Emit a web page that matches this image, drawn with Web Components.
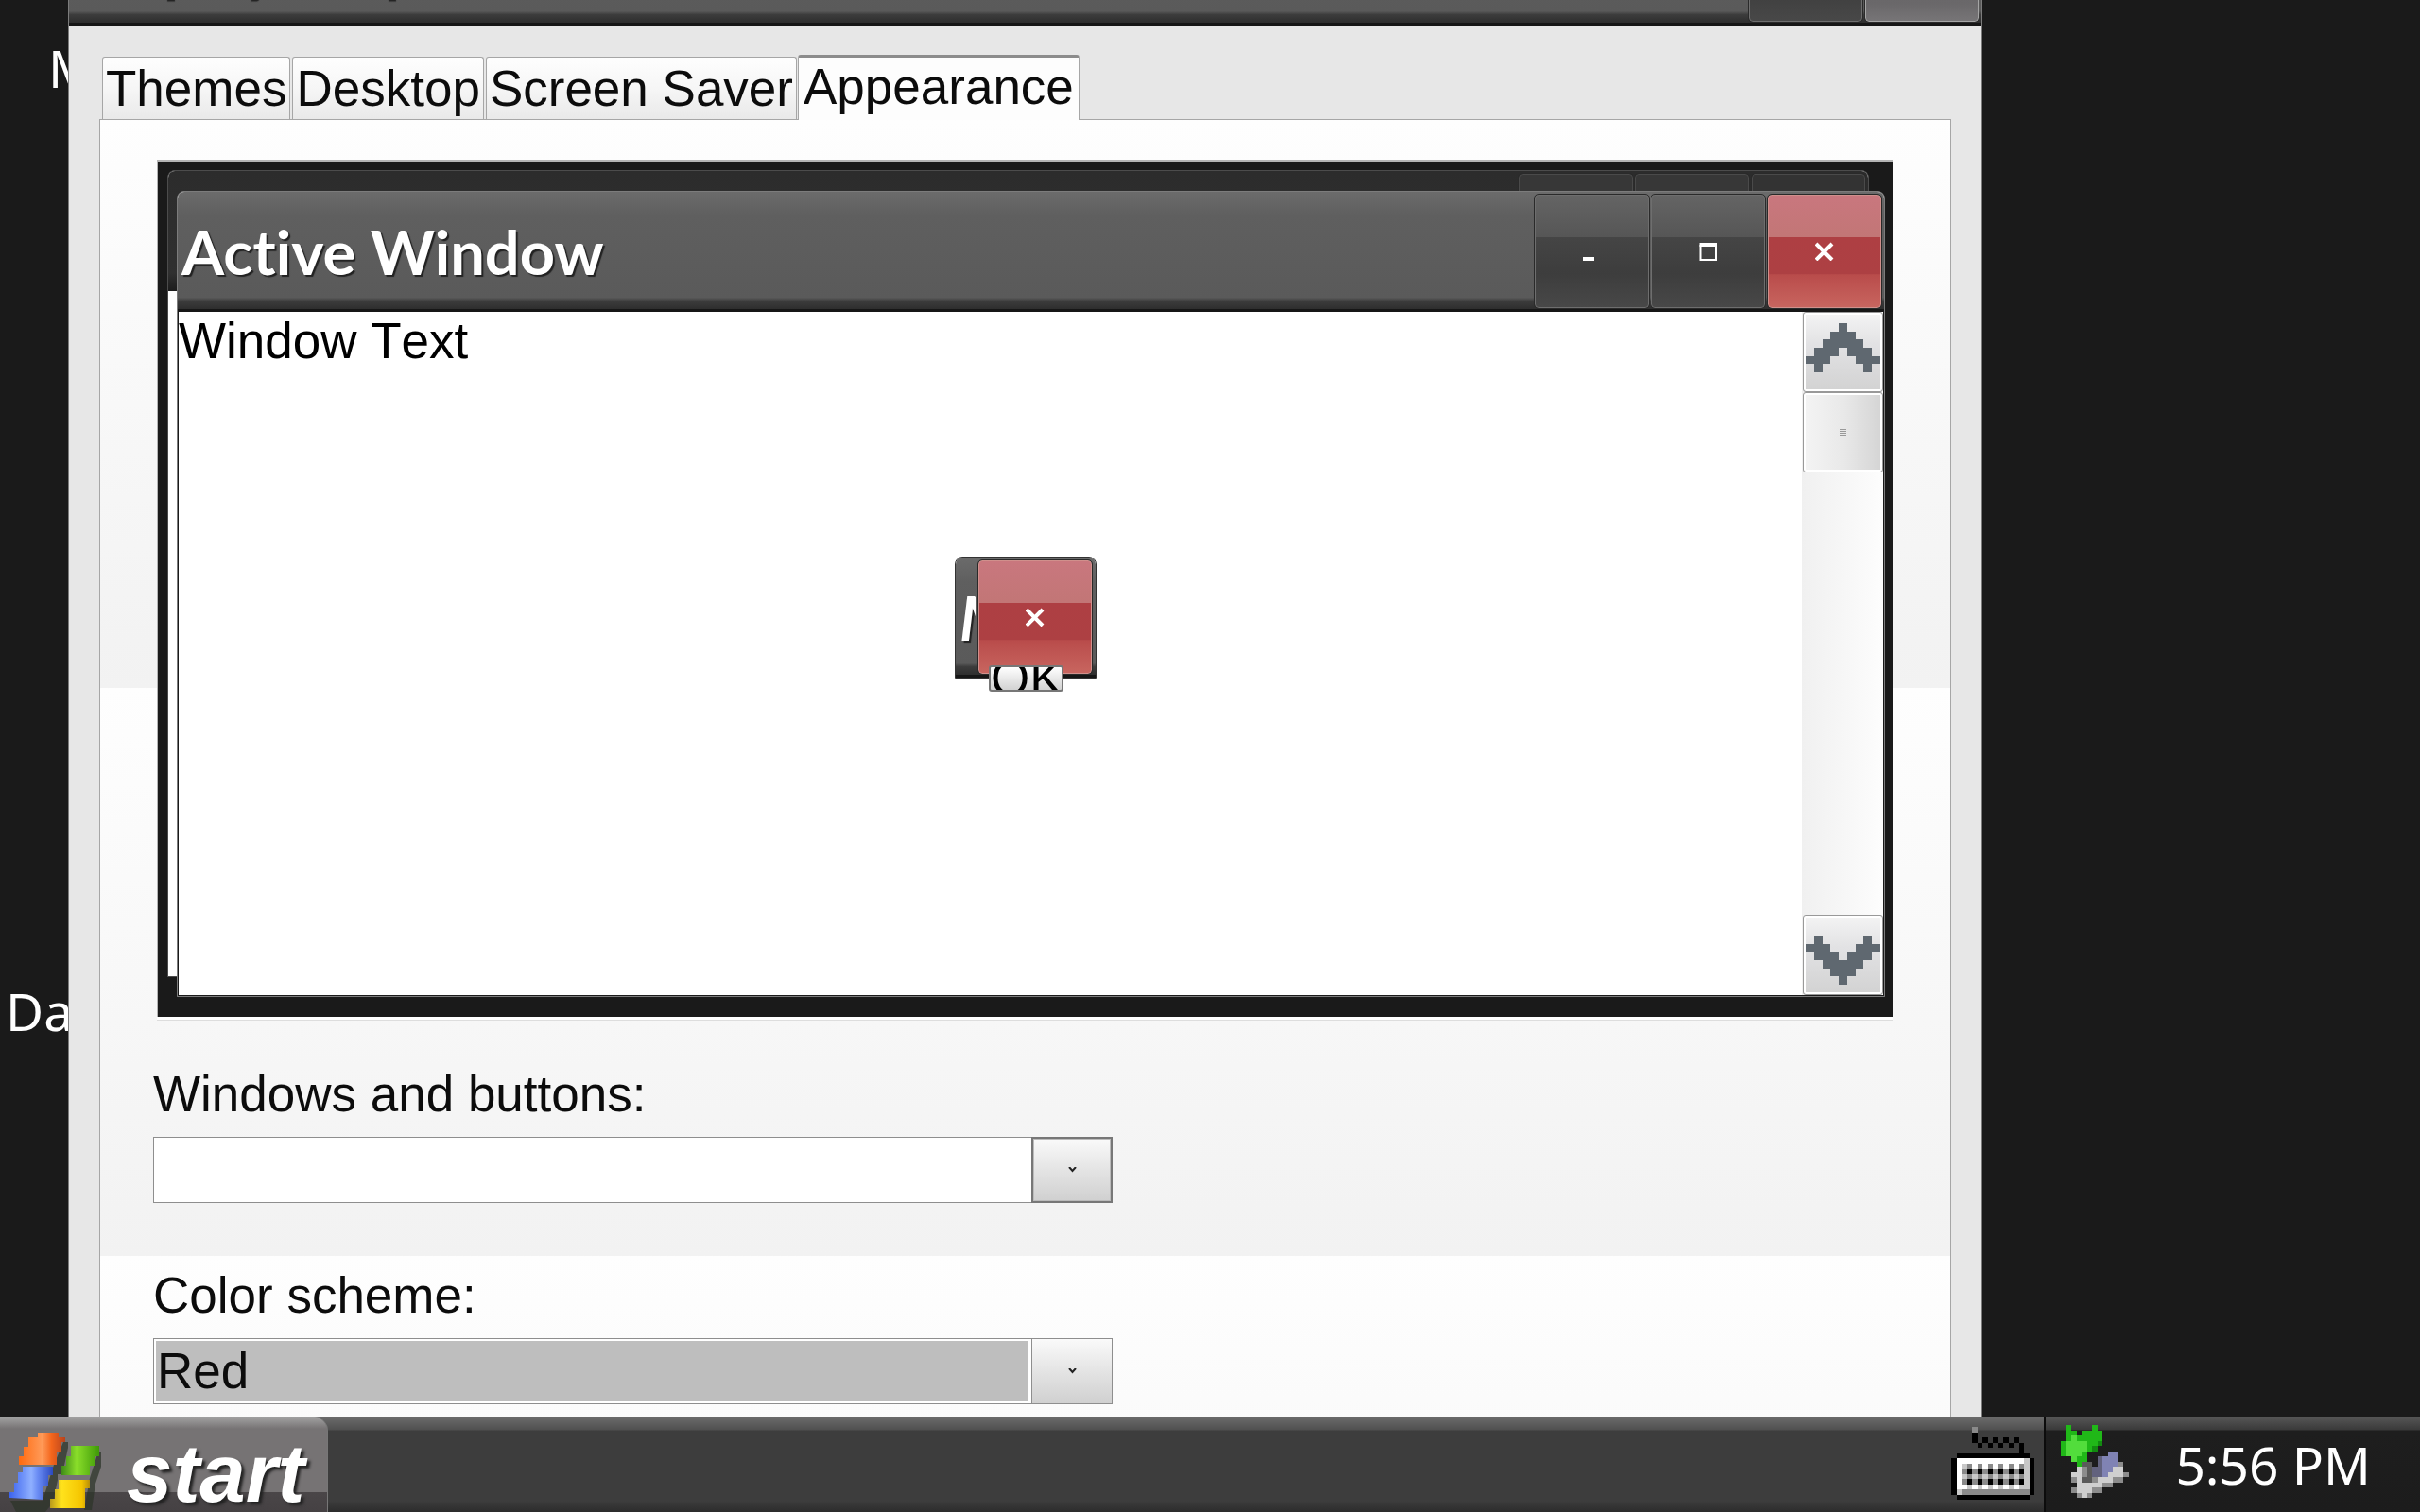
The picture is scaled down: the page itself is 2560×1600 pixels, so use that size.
<!DOCTYPE html>
<html lang="en">
<head>
<meta charset="utf-8">
<title>Display Properties</title>
<style>
  html, body {
    height: 100%;
    margin: 0;
  }
  body {
    overflow: hidden;
    background: #1a1a1a;
    font-family: "Liberation Sans", Arial, sans-serif;
    font-size: 53px;
    line-height: 60px;
    color: #0c0c0c;
  }
</style>
</head>
<body>

<xp-desktop>
  <xp-shortcut style="left: 51px; top: 42px">M</xp-shortcut>
  <xp-shortcut style="left: 6px; top: 1040px">Da</xp-shortcut>

  <xp-window class="main" caption="Display Properties" buttons="help close" tone="muted">
    <xp-tabs>
      <xp-tab>Themes</xp-tab>
      <xp-tab>Desktop</xp-tab>
      <xp-tab>Screen Saver</xp-tab>
      <xp-tab selected>Appearance</xp-tab>
    </xp-tabs>
    <xp-panel>
      <xp-preview></xp-preview>
      <xp-select label="Windows and buttons:" focused></xp-select>
      <xp-select label="Color scheme:" value="Red"></xp-select>
    </xp-panel>
  </xp-window>

  <xp-taskbar slot="taskbar"></xp-taskbar>
</xp-desktop>

<script>
'use strict';

// Base class: clones the class template into an open shadow root
class XPElement extends HTMLElement {
  constructor () {
    super();
    const tpl = document.createElement('template');
    tpl.innerHTML = this.constructor.template;
    this.attachShadow({ mode: 'open' });
    this.shadowRoot.appendChild(tpl.content.cloneNode(true));
  }

  $ (selector) {
    return this.shadowRoot.querySelector(selector);
  }
}

// Draws a bitmap icon: one character per pixel, '.' is transparent
class XPPixels extends XPElement {
  static get template () {
    return `
      <style>
        :host { display: block; flex: none; line-height: 0; }
        svg { display: block; width: 100%; height: 100%; }
      </style>
      <svg shape-rendering="crispEdges" preserveAspectRatio="none" aria-hidden="true"></svg>
    `;
  }

  connectedCallback () {
    const icon = XPPixels.icons[this.getAttribute('icon')];
    const width = Math.max(...icon.rows.map(r => r.length));
    const svg = this.$('svg');
    svg.setAttribute('viewBox', `0 0 ${width} ${icon.rows.length}`);
    let rects = '';
    icon.rows.forEach((row, y) => {
      Array.from(row).forEach((c, x) => {
        if (c !== '.')
          rects += `<rect x="${x}" y="${y}" width="1" height="1" fill="${icon.colors[c]}"/>`;
      });
    });
    svg.innerHTML = rects;
  }
}

XPPixels.icons = {
  up: {
    colors: { x: '#5f6870' },
    rows: [
      '....x....',
      '...xxx...',
      '..xxxxx..',
      '.xxx.xxx.',
      'xxx...xxx',
      '.x.....x.'
    ]
  },
  down: {
    colors: { x: '#5f6870' },
    rows: [
      '.x.....x.',
      'xxx...xxx',
      '.xxx.xxx.',
      '..xxxxx..',
      '...xxx...',
      '....x....'
    ]
  },
  keyboard: {
    colors: { k: '#000', w: '#fff', g: '#8a8a8a', s: '#c8c8c8' },
    rows: [
      '....g...........',
      '....k...........',
      '....k.k.k.k.k...',
      '.....k.k.k.k.k..',
      '.............k..',
      '.kkkkkkkkkkkkkk.',
      'kwwwwwwwwwwwwwsk',
      'kwsgwgwgwgwgwgsk',
      'kwgkgkgkgkgkgksk',
      'kwsgsgsgsgsgsgsk',
      'kwgkgkgkgkgkgksk',
      'kwwswswswswswssk',
      'ksgggggggggggggk',
      '.kkkkkkkkkkkkkk.'
    ]
  },
  remove: {
    colors: {
      G: '#20b818', L: '#52dd3c', d: '#128a10',
      p: '#62627e', B: '#8083b4', w: '#cfcfcf', s: '#8c8c8c', g: '#5a5a5a'
    },
    rows: [
      '.G....G......',
      '.GG.GGGG.....',
      '.GLGGGGG.....',
      'GLLLLGGd.....',
      'GLLLLGd......',
      'GLLLG....BB..',
      '..LGG..pBBB..',
      '...Ggg.pBBBs.',
      '...wsgppBBww.',
      '..wwsgpPBwwws',
      '..swggswwwss.',
      '...wwwwwss...',
      '..swwwss.....',
      '...sws.......'
    ].map(r => r.replace('P', 'p'))
  }
};

class XPDesktop extends XPElement {
  static get template () {
    return `
      <style>
        :host {
          display: grid;
          grid-template-rows: 1fr 101px;
          height: 100vh;
          background: #1a1a1a;
        }
        main { position: relative; overflow: hidden; }
        ::slotted(.main) {
          position: absolute;
          inset: -101px 463px -120px 72px;
        }
        ::slotted(xp-shortcut) { position: absolute; }
      </style>
      <main><slot></slot></main>
      <slot name="taskbar"></slot>
    `;
  }
}

class XPShortcut extends XPElement {
  static get template () {
    return `
      <style>
        :host {
          display: block;
          font-family: "Noto Sans", sans-serif;
          font-size: 55px;
          color: #fff;
        }
      </style>
      <slot></slot>
    `;
  }
}

// Window frame: caption, caption buttons and a slotted client area
class XPWindow extends XPElement {
  static get template () {
    return `
      <style>
        :host {
          display: flex;
          flex-direction: column;
          box-sizing: border-box;
          border: 1px solid #7c7c7c;
          border-radius: 8px 8px 0 0;
          overflow: hidden;
          background: #e7e7e7;
          --bar: linear-gradient(#6b6b6b, #5f5f5f 20%, #5a5a5a 88%, #3c3c3c 91%, #2d2d2d 98%, #161616 98%);
          --glass: linear-gradient(#646464, #565656 37%, #454545 37%, #3d3d3d 70%, #484848);
          --close: linear-gradient(#c9777e, #c27676 37%, #ae3f43 37%, #ad4043 70%, #b94c4b 71%, #c8655f);
        }
        :host([tone="muted"]) {
          --close: linear-gradient(#8a888a, #858385 37%, #646264 37%, #6a686a 85%, #777577);
        }
        :host([tone="inactive"]) {
          border-color: #4c4c4c;
          --bar: linear-gradient(#2c2c2c, #303030 85%, #1c1c1c);
          --glass: #373737;
          --close: #333;
        }
        header {
          display: flex;
          flex: none;
          gap: 3px;
          height: 127px;
          box-sizing: border-box;
          padding: 3px 3px 0 4px;
          background: var(--bar);
        }
        h1 {
          flex: 1;
          min-width: 0;
          margin: 0;
          overflow: hidden;
          white-space: nowrap;
          font: bold 65px/120px Lato, "Noto Sans", sans-serif;
          font-variant-ligatures: none;
          color: #fff;
          text-shadow: 2px 2px 1px #222;
        }
        :host([slanted]) h1 { font-style: italic; }
        :host([slanted]) header { padding-right: 4px; }
        button {
          display: grid;
          place-items: center;
          flex: none;
          width: 120px;
          height: 120px;
          box-sizing: border-box;
          padding: 0;
          border: 1px solid #6e6e6e;
          border-radius: 4px;
          outline: 1px solid #2a2a2a;
          background: var(--glass);
        }
        button.close { background: var(--close); border-color: #d0908c; }
        :host([tone="inactive"]) button { border-color: #4a4a4a; }
        :host([tone="muted"]) button.close { border-color: #a5a5a5; }
        svg { width: 20px; height: 20px; }
        section {
          display: flex;
          flex-direction: column;
          flex: 1;
          min-height: 0;
        }
      </style>
      <header><h1></h1></header>
      <section><slot></slot></section>
    `;
  }

  connectedCallback () {
    this.$('h1').textContent = this.getAttribute('caption');
    const names = (this.getAttribute('buttons') || '').split(' ');
    names.forEach(name => {
      const button = document.createElement('button');
      button.type = 'button';
      button.className = name;
      button.setAttribute('aria-label', name);
      button.innerHTML = `<svg viewBox="0 0 20 20" fill="none" stroke="#fff">${XPWindow.glyphs[name]}</svg>`;
      this.$('header').appendChild(button);
    });
  }
}

XPWindow.glyphs = {
  help: '<path d="M5 6q0-5 5-5t5 5q0 3-5 6v3M10 17v3" stroke-width="3"/>',
  minimize: '<path d="M1 18h11" stroke-width="4"/>',
  maximize: '<path d="M1.500 3v16h16.500V3" stroke-width="2"/><path d="M.5 3h18.500" stroke-width="4"/>',
  close: '<path d="M1 2l17 17M18 2L1 19" stroke-width="4"/>'
};

class XPTabs extends XPElement {
  static get template () {
    return `
      <style>
        :host { display: block; padding: 31px 35px 0; }
        nav { display: flex; align-items: flex-end; gap: 2px; }
      </style>
      <nav role="tablist"><slot></slot></nav>
    `;
  }
}

class XPTab extends XPElement {
  static get template () {
    return `
      <style>
        :host { display: block; position: relative; z-index: 1; }
        button {
          display: block;
          box-sizing: border-box;
          height: 66px;
          margin: 0;
          padding: 3px 3px 2px;
          border: 1px solid #a6a6a6;
          border-bottom: 0;
          border-radius: 3px 3px 0 0;
          background: linear-gradient(#fefefe, #f6f6f6 50%, #e9e9e9);
          font: inherit;
          color: inherit;
        }
        :host([selected]) { margin: 0 0 -1px -1px; }
        :host([selected]) button {
          height: 69px;
          padding: 1px 5px 5px;
          border-top: 3px solid #8c8c8c;
          background: #fdfdfd;
        }
      </style>
      <button type="button" role="tab"><slot></slot></button>
    `;
  }

  connectedCallback () {
    this.$('button').setAttribute('aria-selected', this.hasAttribute('selected'));
  }
}

class XPPanel extends XPElement {
  static get template () {
    return `
      <style>
        :host {
          display: flex;
          flex-direction: column;
          flex: 1;
          gap: 68px;
          margin: 0 32px;
          padding: 42px 56px 0;
          border: 1px solid #a6a6a6;
          background: linear-gradient(#fefefe, #f2f2f2) 0 0 / 100% 601px;
        }
        ::slotted(xp-preview) { margin: 0 4px -16px; }
      </style>
      <slot></slot>
    `;
  }
}

class XPScrollbar extends XPElement {
  static get template () {
    return `
      <style>
        :host {
          display: flex;
          flex-direction: column;
          width: 86px;
          box-sizing: border-box;
          padding-left: 1px;
          background: linear-gradient(90deg, #f0f0f0, #fdfdfd);
        }
        button {
          display: grid;
          place-items: center;
          height: 85px;
          box-sizing: border-box;
          padding: 0;
          border: 1px solid #999;
          border-radius: 3px;
          box-shadow: inset 0 0 0 2px #fff;
          background: linear-gradient(#f4f4f4, #e2e2e4 40%, #d2d2d2);
        }
        .up { padding-bottom: 10px; }
        .down { padding-top: 10px; margin-top: auto; }
        .thumb { background: linear-gradient(90deg, #f4f4f4, #e9e9e9 50%, #d4d4d4); }
        xp-pixels { width: 79px; height: 52px; }
        svg { width: 7px; height: 8px; }
      </style>
      <button type="button" class="up" aria-label="Scroll up"><xp-pixels icon="up"></xp-pixels></button>
      <button type="button" class="thumb" aria-label="Scroll thumb">
        <svg viewBox="0 0 7 8"><path d="M0 .5h7M0 2.500h7M0 4.500h7M0 6.500h7" stroke="#999"/></svg>
      </button>
      <button type="button" class="down" aria-label="Scroll down"><xp-pixels icon="down"></xp-pixels></button>
    `;
  }
}

// Miniature desktop with an inactive window, an active one and a message box
class XPPreview extends XPElement {
  static get template () {
    return `
      <style>
        :host {
          display: block;
          position: relative;
          height: 905px;
          border: 1px solid #b4b4b4;
          border-width: 2px 0 0 1px;
          background: #1a1a1a;
          box-shadow: 0 3px 0 #fff, 0 4px 0 #ddd;
        }
        xp-window { position: absolute; background: #fff; }
        .inactive { inset: 9px 26px 42px 10px; }
        .active { inset: 31px 9px 21px 20px; }
        .message { left: calc(50% - 75px); top: 418px; width: 150px; border-color: #333; }
        .client {
          display: flex;
          flex: 1;
          border: 1px solid #1a1a1a;
          border-top: 0;
          background: #fff;
          color: #000;
        }
        .client p {
          flex: 1;
          margin: 0;
          padding-top: 1px;
          font-kerning: none;
        }
        .ok {
          position: absolute;
          left: calc(50% - 39px);
          top: 533px;
          display: grid;
          place-items: center;
          width: 79px;
          height: 28px;
          box-sizing: border-box;
          padding: 0;
          border: 2px solid #777;
          border-radius: 3px;
          background: linear-gradient(#fff, #d2d2d2);
          overflow: hidden;
          font: inherit;
          line-height: 24px;
          color: #000;
        }
      </style>
      <xp-window class="inactive" tone="inactive" caption="" buttons="minimize maximize close"></xp-window>
      <xp-window class="active" caption="Active Window" buttons="minimize maximize close">
        <div class="client">
          <p>Window Text</p>
          <xp-scrollbar></xp-scrollbar>
        </div>
      </xp-window>
      <xp-window class="message" slanted caption="M" buttons="close"></xp-window>
      <button type="button" class="ok">OK</button>
    `;
  }
}

class XPSelect extends XPElement {
  static get template () {
    return `
      <style>
        :host { display: flex; flex-direction: column; gap: 15px; }
        label { display: block; }
        .box {
          display: grid;
          grid-template-columns: 1fr 86px;
          width: 1015px;
          max-width: 100%;
        }
        select {
          grid-area: 1 / 1 / 2 / 3;
          appearance: none;
          width: 100%;
          height: 70px;
          box-sizing: border-box;
          margin: 0;
          padding: 0 90px 0 3px;
          border: 1px solid #8e8e8e;
          border-radius: 0;
          background: #fff;
          font: inherit;
          color: inherit;
          outline: 0;
        }
        :host([value]) select {
          background: linear-gradient(#bebebe, #bebebe) 2px 2px / calc(100% - 90px) calc(100% - 4px) no-repeat #fff;
        }
        .arrow {
          grid-area: 1 / 2;
          display: grid;
          place-items: center;
          box-sizing: border-box;
          border: 1px solid #8e8e8e;
          background: linear-gradient(#fafafa, #e4e4e4 50%, #d0d0d0);
          pointer-events: none;
        }
        :host([focused]) .arrow { border: 2px solid #777; box-shadow: inset 0 0 0 1px #bbb; }
        svg { width: 9px; height: 6px; }
      </style>
      <label for="field"></label>
      <div class="box">
        <select id="field"><option></option></select>
        <span class="arrow">
          <svg viewBox="0 0 9 6" fill="none" stroke="#222" stroke-width="2"><path d="M1 0l3.500 4L8 0"/></svg>
        </span>
      </div>
    `;
  }

  connectedCallback () {
    this.$('label').textContent = this.getAttribute('label');
    this.$('option').textContent = this.getAttribute('value') || '';
  }
}

class XPTaskbar extends XPElement {
  static get template () {
    return `
      <style>
        :host {
          display: flex;
          box-sizing: border-box;
          border-top: 1px solid #111;
          overflow: hidden;
          background: linear-gradient(#6a6a6a, #505050 13px, #3d3d3d 14px, #3d3d3d 88px, #2c2c2c);
        }
        .start {
          display: flex;
          align-items: flex-start;
          width: 347px;
          margin: 0;
          padding: 0;
          border: 0;
          border-right: 1px solid #777;
          border-radius: 0 14px 0 0;
          background: linear-gradient(#a0a0a0, #767374 12px, #767374 79px, #4a4648 79px, #454143);
          font: italic bold 87px/118px "Liberation Sans", Arial, sans-serif;
          color: #fff;
          text-shadow: 3px 3px 3px #222;
        }
        .start svg { flex: none; width: 120px; height: 101px; margin-right: 14px; }
        .keyboard { width: 88px; height: 77px; margin: 10px 10px 0 auto; }
        aside {
          display: flex;
          align-items: flex-start;
          width: 398px;
          box-sizing: border-box;
          padding: 8px 52px 0 16px;
          border-left: 2px solid #0c0c0c;
          background: linear-gradient(#555, #3a3a3a 13px, #1e1e1e 14px, #1c1c1c);
        }
        .remove { width: 72px; height: 77px; }
        time {
          flex: 1;
          padding-top: 12px;
          text-align: right;
          white-space: nowrap;
          font-family: "Noto Sans", sans-serif;
          font-size: 55px;
          color: #fff;
        }
      </style>
      <button type="button" class="start">
        <svg viewBox="0 4 120 101" aria-hidden="true">
          <defs>
            <linearGradient id="r"><stop offset="0" stop-color="#ff6a10"/><stop offset=".5" stop-color="#ff9a58"/><stop offset=".7" stop-color="#f4661c"/><stop offset="1" stop-color="#b8431c"/></linearGradient>
            <linearGradient id="g"><stop offset="0" stop-color="#3f8a18"/><stop offset=".4" stop-color="#8ade2a"/><stop offset="1" stop-color="#3f9a08"/></linearGradient>
            <linearGradient id="b"><stop offset="0" stop-color="#3c63ee"/><stop offset=".5" stop-color="#8fb0ff"/><stop offset=".65" stop-color="#6a8cf4"/><stop offset="1" stop-color="#2b49c0"/></linearGradient>
            <linearGradient id="y"><stop offset="0" stop-color="#b89a1c"/><stop offset=".3" stop-color="#ffe21c"/><stop offset=".8" stop-color="#f4c400"/><stop offset="1" stop-color="#b88e08"/></linearGradient>
          </defs>
          <g fill="#2c3428" opacity=".7">
            <path d="M67 30h5v6l-6 28h-5v6l-5 24-8 10H17l-6-12h34l12-38z"/>
            <path d="M104 40h3v16l-6 18-4 28h-8l6-34z"/>
          </g>
          <path fill="url(#r)" d="M20 54v-9h5V35h5V25h10v-5h22v5h7v5h-4v10h-5v14z"/>
          <path fill="url(#g)" d="M65 65V55h5V45h5V34h30v11h-5v10h-5v10z"/>
          <path fill="url(#b)" d="M10 89v-6h5V73h4V62h5v-6h32v9h-5v12h-5v14z"/>
          <path fill="url(#y)" d="M53 100V90h5V80h4V70h33v9h-5v21z"/>
        </svg>
        start
      </button>
      <xp-pixels class="keyboard" icon="keyboard"></xp-pixels>
      <aside>
        <xp-pixels class="remove" icon="remove"></xp-pixels>
        <time datetime="17:56">5:56 PM</time>
      </aside>
    `;
  }
}

window.customElements.define('xp-pixels', XPPixels);
window.customElements.define('xp-shortcut', XPShortcut);
window.customElements.define('xp-scrollbar', XPScrollbar);
window.customElements.define('xp-window', XPWindow);
window.customElements.define('xp-tab', XPTab);
window.customElements.define('xp-tabs', XPTabs);
window.customElements.define('xp-preview', XPPreview);
window.customElements.define('xp-select', XPSelect);
window.customElements.define('xp-panel', XPPanel);
window.customElements.define('xp-taskbar', XPTaskbar);
window.customElements.define('xp-desktop', XPDesktop);
</script>
</body>
</html>
